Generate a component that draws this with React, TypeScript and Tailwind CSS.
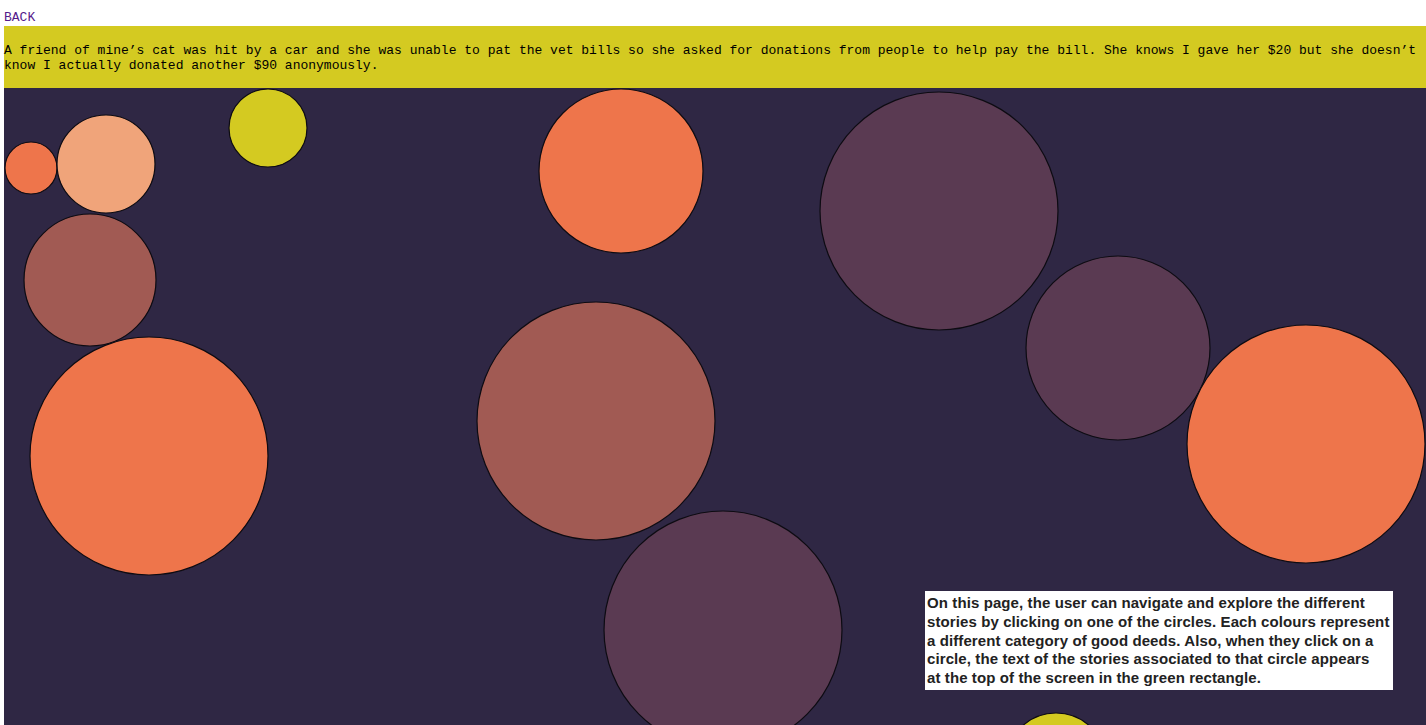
import React from "react";

type Circle = { x: number; y: number; r: number; fill: string };

const ORANGE = "#ee754b";
const PEACH = "#f0a47a";
const YELLOW = "#d4ca21";
const BROWN = "#a15a53";
const PLUM = "#5a3a52";

// positions relative to the canvas (top-left at page 4,88)
const circles: Circle[] = [
    { x: 27, y: 80, r: 26, fill: ORANGE },
    { x: 102, y: 76, r: 49, fill: PEACH },
    { x: 264, y: 40, r: 39, fill: YELLOW },
    { x: 86, y: 192, r: 66, fill: BROWN },
    { x: 145, y: 368, r: 119, fill: ORANGE },
    { x: 617, y: 83, r: 82, fill: ORANGE },
    { x: 592, y: 333, r: 119, fill: BROWN },
    { x: 719, y: 542, r: 119, fill: PLUM },
    { x: 935, y: 123, r: 119, fill: PLUM },
    { x: 1114, y: 260, r: 92, fill: PLUM },
    { x: 1302, y: 356, r: 119, fill: ORANGE },
    { x: 1052, y: 675, r: 50, fill: YELLOW },
];

const story =
    "A friend of mine\u2019s cat was hit by a car and she was unable to pat the vet bills so she asked for donations from people to help pay the bill. She knows I gave her $20 but she doesn\u2019t know I actually donated another $90 anonymously.";

const info = [
    "On this page, the user can navigate and explore the different",
    "stories by clicking on one of the circles. Each colours represent",
    "a different category of good deeds. Also, when they click on a",
    "circle, the text of the stories associated to that circle appears",
    "at the top of the screen in the green rectangle.",
];

export default function App() {
    return (
        <div className="h-[725px] w-[1426px] overflow-hidden bg-white pl-[4px] font-['Liberation_Mono',monospace]">
            <div className="pt-[10px] pb-[1px] text-[13px] leading-[15px]">
                <a href="#" className="text-[#551a8b]">BACK</a>
            </div>

            <div className="h-[62px] w-[1422px] bg-[#d4ca21] pt-[17px] pr-[4px] text-[13px] leading-[15px] text-black">
                {story}
            </div>

            <div className="relative h-[637px] w-[1422px] bg-[#2f2744]">
                <svg width="1422" height="637" className="block">
                    {circles.map((c, i) => (
                        <circle key={i} cx={c.x} cy={c.y} r={c.r} fill={c.fill} stroke="#0d0b12" strokeWidth={1.2} />
                    ))}
                </svg>

                {/* description box */}
                <div className="absolute left-[921px] top-[503px] h-[99px] w-[468px] bg-white px-[2px] pt-[3px] font-['Liberation_Sans',Arial,sans-serif] text-[15px] font-bold leading-[18.75px] tracking-[0.1px] text-[#222]">
                    {info.map((line) => (
                        <span key={line} className="block whitespace-nowrap">{line}</span>
                    ))}
                </div>
            </div>
        </div>
    );
}
